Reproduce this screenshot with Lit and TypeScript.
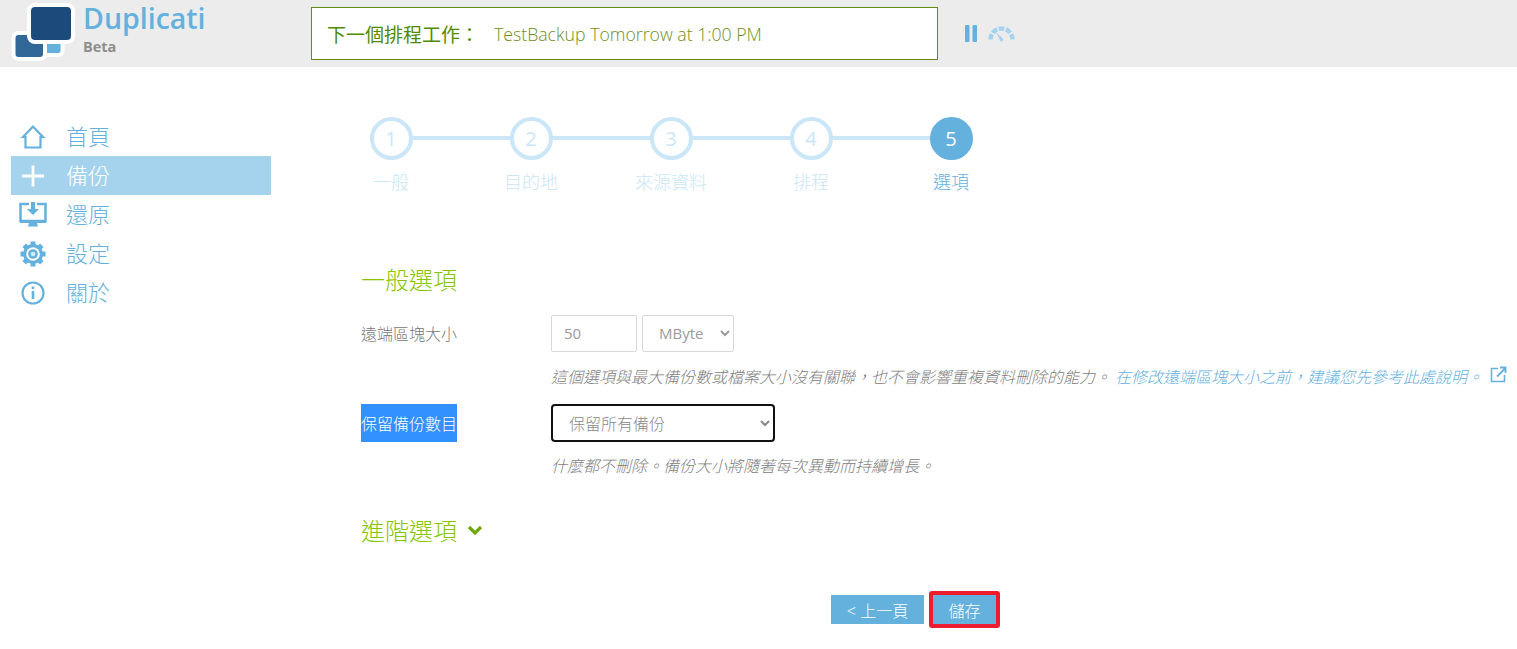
import { LitElement, html, css } from "lit";
import { customElement } from "lit/decorators.js";

const STEPS = [
  ["1", "一般"],
  ["2", "目的地"],
  ["3", "來源資料"],
  ["4", "排程"],
  ["5", "選項"],
];

@customElement("app-root")
export class AppRoot extends LitElement {
  static styles = css`
    :host {
      display: block;
      width: 1517px;
      height: 649px;
      overflow: hidden;
      background: #fff;
      font-family: "Open Sans", "Noto Sans CJK TC", sans-serif;
      color: #888;
      --blue: #64b1de;
    }
    * { box-sizing: border-box; }
    .header {
      height: 67px;
      background: #ececec;
      display: flex;
      position: relative;
    }
    .logo { width: 75px; height: 67px; margin-left: 8px; flex: none; }
    .brand { width: 228px; flex: none; }
    .name {
      color: var(--blue);
      font-size: 28.5px;
      font-weight: 600;
      line-height: 37px;
    }
    .beta {
      color: #8e8e8e;
      font-size: 14.5px;
      font-weight: 700;
      line-height: 20px;
    }
    .status {
      margin-top: 7px;
      width: 627px;
      height: 53px;
      border: 1px solid #678c12;
      background: #fff;
      display: flex;
      align-items: center;
      padding-left: 15px;
      color: #678c12;
      flex: none;
    }
    .status b {
      font-family: "Noto Sans CJK TC", sans-serif;
      font-weight: 400;
      font-size: 19px;
      width: 167px;
      flex: none;
      color: #4f8a00;
    }
    .status span { font-size: 17.7px; font-weight: 300; color: #6f8f18; }
    .ctl { display: flex; align-items: center; margin-left: 27px; gap: 11px; height: 67px; }
    .body { display: flex; }
    .side { width: 350px; padding: 50px 0 0 11px; flex: none; }
    .nav {
      width: 260px;
      height: 39px;
      display: flex;
      align-items: center;
      color: var(--blue);
      font-size: 22px;
      font-family: "Noto Sans CJK TC", sans-serif;
      font-weight: 300;
    }
    .nav span { margin-bottom: 4px; }
    .nav.active { background: #a5d3ee; color: #fff; }
    .nav svg { width: 30px; height: 30px; margin-left: 7px; margin-right: 18px; flex: none; }
    .main { padding-left: 11px; flex: 1; min-width: 0; font-family: "Noto Sans CJK TC", sans-serif; }
    .stepper { margin-top: 50px; display: flex; margin-left: -40px; }
    .step {
      width: 140px;
      display: flex;
      flex-direction: column;
      align-items: center;
      position: relative;
      color: #cae6f7;
      font-size: 18px;
      font-weight: 300;
    }
    .step::after {
      content: "";
      position: absolute;
      left: 70px;
      top: 19px;
      width: 140px;
      height: 4px;
      background: #cae6f7;
    }
    .step:last-child::after { display: none; }
    .circle {
      width: 43px;
      height: 43px;
      border-radius: 50%;
      border: 4px solid #cae6f7;
      background: #fff;
      display: flex;
      align-items: center;
      justify-content: center;
      font-family: "Open Sans", sans-serif;
      font-size: 20px;
      font-weight: 500;
      position: relative;
      z-index: 1;
      margin-bottom: 8px;
      line-height: 1;
    }
    .step.on { color: var(--blue); }
    .step.on .circle { background: var(--blue); border-color: var(--blue); color: #fff; }
    .section {
      color: #86c600;
      font-size: 24px;
      font-weight: 300;
      line-height: 36px;
      margin: 0;
      display: flex;
      align-items: center;
      gap: 10px;
    }
    .s1 { margin-top: 67px; }
    .row { display: flex; margin-top: 17px; height: 38px; align-items: center; }
    .label { width: 190px; font-size: 16px; font-weight: 300; color: #777; flex: none; line-height: 38px; }
    .label.sel span { display: inline-block; width: 96px; background: #3390ff; color: #fff; }
    input, select {
      font-family: "Open Sans", "Noto Sans CJK TC", sans-serif;
      font-size: 15px;
      color: #9a9a9a;
      background: #fff;
      border: 1px solid #d8d8d8;
      border-radius: 2px;
      height: 37px;
      outline: none;
    }
    .num { width: 86px; padding: 0 12px; margin-right: 5px; }
    .unit { width: 92px; padding: 0 12px; }
    .keep {
      width: 224px;
      height: 38px;
      border: 2px solid #111;
      border-radius: 4px;
      padding: 0 12px;
      font-family: "Noto Sans CJK TC", sans-serif;
      font-weight: 300;
      font-size: 16px;
      color: #888;
    }
    .hint {
      margin-left: 190px;
      font-size: 16px;
      font-style: italic;
      font-weight: 300;
      color: #808080;
      line-height: 22px;
      white-space: nowrap;
      display: flex;
      align-items: center;
    }
    .hint.a { margin-top: 13px; }
    .hint.b { margin-top: 12px; }
    .hint a { color: var(--blue); margin-left: 4px; }
    .hint svg { width: 17px; height: 17px; margin-left: 7px; margin-top: -4px; flex: none; }
    .r2 { margin-top: 17px; }
    .s2 { margin-top: 36px; }
    .btns { display: flex; margin: 43px 0 0 470px; align-items: center; gap: 5px; }
    .btn {
      background: var(--blue);
      color: #fff;
      font-size: 16px;
      font-weight: 300;
      height: 29px;
      border: 0;
      font-family: "Open Sans", "Noto Sans CJK TC", sans-serif;
      padding: 0;
    }
    .prev { width: 93px; }
    .save { width: 71px; height: 37px; border: 4px solid #ed1c2e; border-radius: 3px; }
  `;

  render() {
    return html`
      <div class="header">
        <svg class="logo" viewBox="0 0 75 67">
          <rect x="33" y="36" width="21.500" height="19" rx="4" fill="#64b1de" stroke="#fff" stroke-width="4"></rect>
          <rect x="5.500" y="33" width="31.500" height="26" rx="5" fill="#316898" stroke="#fff" stroke-width="4"></rect>
          <rect x="21" y="5" width="44" height="37" rx="6" fill="#1c4a7a" stroke="#fff" stroke-width="4"></rect>
        </svg>
        <div class="brand">
          <div class="name">Duplicati</div>
          <div class="beta">Beta</div>
        </div>
        <div class="status">
          <b>下一個排程工作：</b>
          <span>TestBackup Tomorrow at 1:00 PM</span>
        </div>
        <div class="ctl">
          <svg width="12" height="17" viewBox="0 0 12 17">
            <rect x="0" y="0" width="4.500" height="17" rx="1" fill="#64b1de"></rect>
            <rect x="7.500" y="0" width="4.500" height="17" rx="1" fill="#64b1de"></rect>
          </svg>
          <svg width="27" height="17" viewBox="0 0 27 17">
            <path
              d="M2.500 14.500A11 11 0 0 1 24.500 14.500"
              fill="none"
              stroke="#a5d3ee"
              stroke-width="4.500"
              pathLength="100"
              stroke-dasharray="16 5"
            ></path>
            <path d="M8 7l6.800 6.500a1.700 1.700 0 0 1-2.400 2.400z" fill="#a5d3ee"></path>
          </svg>
        </div>
      </div>
      <div class="body">
        <div class="side">
          <div class="nav">
            <svg viewBox="0 0 30 30" fill="none" stroke="#64b1de" stroke-width="2.200">
              <path d="M5 15 15 4.500 25 15h-2.500v10.500h-15V15z"></path>
            </svg>
            <span>首頁</span>
          </div>
          <div class="nav active">
            <svg viewBox="0 0 30 30" fill="none" stroke="#fff" stroke-width="2.800">
              <path d="M4 15h22M15 4.500v21"></path>
            </svg>
            <span>備份</span>
          </div>
          <div class="nav">
            <svg viewBox="0 0 30 30">
              <path fill="none" stroke="#64b1de" stroke-width="2.500" d="M11 4H2.500v17h25V4H19"></path>
              <path fill="#64b1de" d="M2 20h26v3H2zM11 23h8l1 3.500H10zM13 2h4v7h4l-6 6-6-6h4z"></path>
            </svg>
            <span>還原</span>
          </div>
          <div class="nav">
            <svg viewBox="0 0 30 30">
              <g fill="none" stroke="#64b1de" stroke-width="5">
                <path d="M15 2.500v25M2.500 15h25M6.200 6.200l17.600 17.600M23.800 6.200 6.200 23.800"></path>
              </g>
              <circle cx="15" cy="15" r="10" fill="#64b1de"></circle>
              <circle cx="15" cy="15" r="6.800" fill="#fff"></circle>
              <circle cx="15" cy="15" r="4.800" fill="#64b1de"></circle>
              <circle cx="15" cy="15" r="2.300" fill="#d4e9f6"></circle>
            </svg>
            <span>設定</span>
          </div>
          <div class="nav">
            <svg viewBox="0 0 30 30" fill="none" stroke="#64b1de" stroke-width="2.200">
              <circle cx="15" cy="15" r="10.500"></circle>
              <path stroke-width="2.600" d="M15 13v8"></path>
              <path stroke-width="2.600" d="M15 8.500v2.500"></path>
            </svg>
            <span>關於</span>
          </div>
        </div>
        <div class="main">
          <div class="stepper">
            ${STEPS.map(
              ([n, t], i) => html`
                <div class="step ${i === 4 ? "on" : ""}">
                  <div class="circle">${n}</div>
                  <div>${t}</div>
                </div>
              `
            )}
          </div>
          <h2 class="section s1">一般選項</h2>
          <div class="row">
            <div class="label">遠端區塊大小</div>
            <input class="num" value="50" />
            <select class="unit"><option>MByte</option></select>
          </div>
          <div class="hint a">
            這個選項與最大備份數或檔案大小沒有關聯，也不會影響重複資料刪除的能力。
            <a>在修改遠端區塊大小之前，建議您先參考此處說明。</a>
            <svg viewBox="0 0 17 17" fill="none" stroke="#64b1de" stroke-width="1.600">
              <path d="M8 2.500H1.500v13h13V9"></path>
              <path d="M7 10.500 15 2.500M10 1.500h5.500V7" stroke-width="1.800"></path>
            </svg>
          </div>
          <div class="row r2">
            <div class="label sel"><span>保留備份數目</span></div>
            <select class="keep"><option>保留所有備份</option></select>
          </div>
          <div class="hint b">什麼都不刪除。備份大小將隨著每次異動而持續增長。</div>
          <h2 class="section s2">
            進階選項
            <svg width="16" height="11" viewBox="0 0 16 11" fill="none" stroke="#6ea80d" stroke-width="3.200">
              <path d="M2 2l6 6 6-6"></path>
            </svg>
          </h2>
          <div class="btns">
            <button class="btn prev">&lt; 上一頁</button>
            <button class="btn save">儲存</button>
          </div>
        </div>
      </div>
    `;
  }
}
